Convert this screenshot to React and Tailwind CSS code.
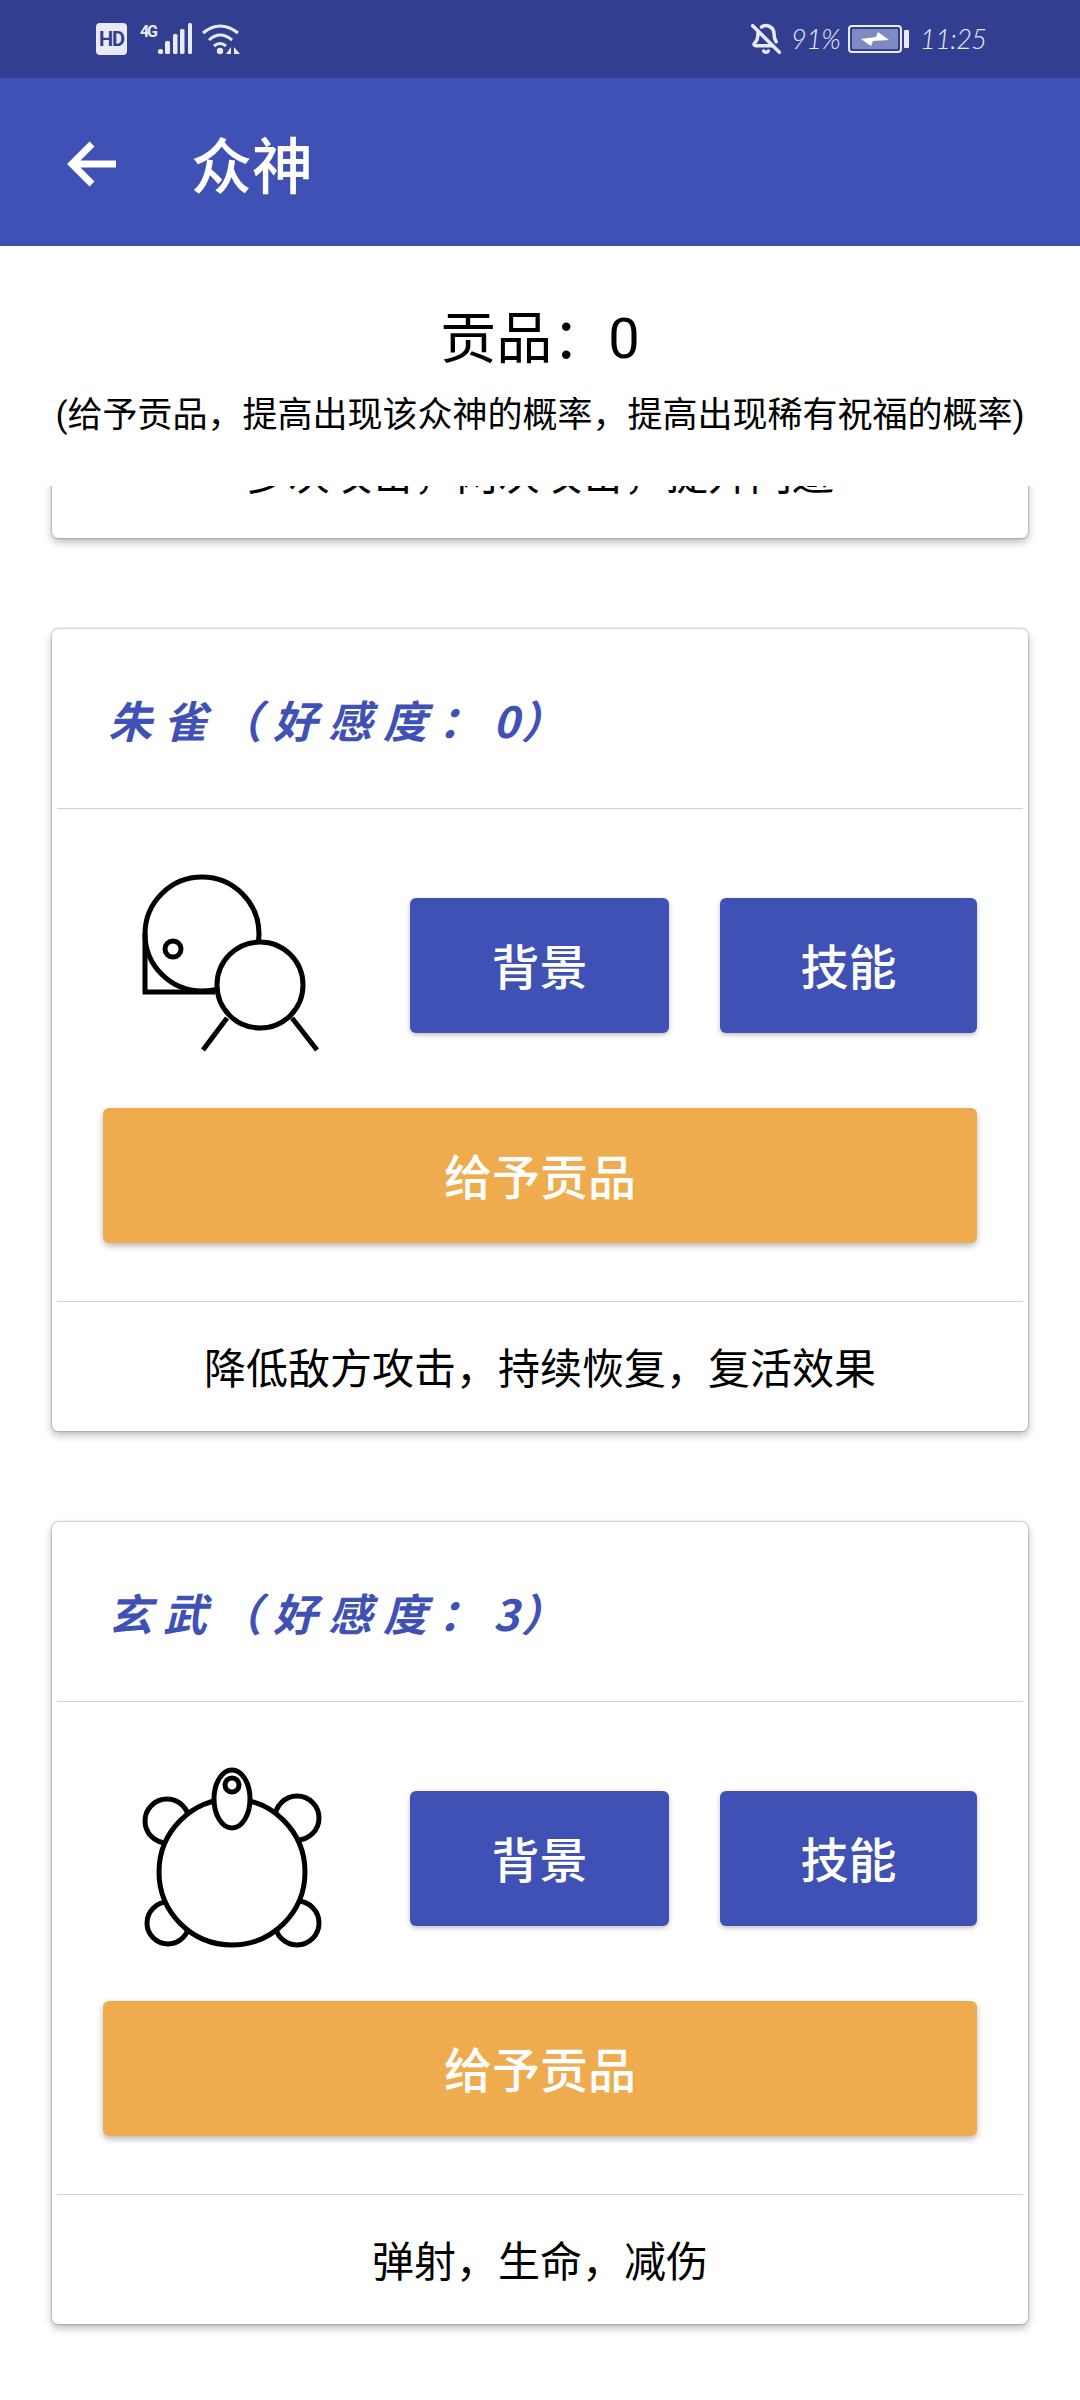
import React from "react";
import { BellOff } from "lucide-react";

const cardShadow = "shadow-[0_4px_8px_rgba(0,0,0,0.28),0_0_2px_rgba(0,0,0,0.5)]";

function Zhuque() {
  return (
    <svg width="260" height="230" viewBox="100 850 260 230" fill="none" stroke="#000" strokeWidth="5" className="shrink-0">
      <circle cx="202" cy="934" r="57" fill="#fff" />
      <path d="M145 934V992H215" />
      <circle cx="173" cy="949" r="8" />
      <path d="M227 1018L203 1050M292 1018L317 1050" />
      <circle cx="260" cy="985" r="43" fill="#fff" />
    </svg>
  );
}

function Xuanwu() {
  return (
    <svg width="260" height="230" viewBox="100 1743 260 230" fill="none" stroke="#000" strokeWidth="5" className="shrink-0">
      <circle cx="167" cy="1821" r="22" />
      <circle cx="297" cy="1818" r="22" />
      <circle cx="168" cy="1923" r="21" />
      <circle cx="297" cy="1923" r="22" />
      <circle cx="232" cy="1872" r="73" fill="#fff" />
      <ellipse cx="232" cy="1799" rx="18" ry="29" fill="#fff" />
      <circle cx="232" cy="1785" r="7" />
    </svg>
  );
}

function GodCard({ name, favor, icon, desc }) {
  return (
    <div className={"mx-[52px] h-[802px] shrink-0 rounded-[6px] bg-white flex flex-col " + cardShadow}>
      <div className="h-[179px] flex items-center pl-[56px] text-[#3f51b5] text-[44px] italic font-bold tracking-[11px] font-['Noto_Sans_CJK_SC',sans-serif]">
        {name}（好感度：<span className="tracking-[2px]">{favor}</span>）
      </div>
      <div className="mx-[5px] h-px bg-[#d0d0d0]" />
      <div className="flex items-center pt-[41px] pl-[48px]">
        {icon}
        <div className="ml-[50px] flex gap-[51px]">
          <button className="w-[259px] h-[135px] pt-[7px] rounded-[6px] bg-[#3f51b5] text-white text-[48px] font-medium shadow-[0_2px_5px_rgba(0,0,0,0.25)]">背景</button>
          <button className="w-[257px] h-[135px] pt-[7px] rounded-[6px] bg-[#3f51b5] text-white text-[48px] font-medium shadow-[0_2px_5px_rgba(0,0,0,0.25)]">技能</button>
        </div>
      </div>
      <button className="mt-[28px] ml-[51px] w-[874px] h-[135px] pt-[7px] shrink-0 rounded-[6px] bg-[#eeac4e] text-white text-[48px] font-medium shadow-[0_3px_6px_rgba(0,0,0,0.28)]">给予贡品</button>
      <div className="mt-[58px] mx-[5px] h-px bg-[#d0d0d0]" />
      <div className="flex-1 flex items-center justify-center pt-[5px] text-[42px] text-black">{desc}</div>
    </div>
  );
}

export default function App() {
  return (
    <div className="w-[1080px] h-[2400px] overflow-hidden bg-white flex flex-col font-['Roboto','Noto_Sans_CJK_SC',sans-serif]">
      <div className="h-[78px] shrink-0 bg-[#323f90] flex items-center text-[#e8ebf7] pl-[96px] pr-[97px]">
        <div className="w-[31px] h-[32px] rounded-[4px] bg-[#e8ebf7] text-[#323f90] text-[20px] font-bold flex items-center justify-center font-['Roboto',sans-serif] tracking-[-1px]">HD</div>
        <svg width="116" height="36" viewBox="121 21 116 36" fill="#e8ebf7">
          <text x="134" y="37" fontSize="16" fontWeight="700" fontFamily="Roboto" textLength="18">4G</text>
          <circle cx="154.5" cy="51.5" r="2.6" />
          <rect x="159" y="41" width="5" height="13" rx="1.5" />
          <rect x="167" y="34" width="4.5" height="20" rx="1.5" />
          <rect x="174" y="29" width="4.5" height="25" rx="1.5" />
          <rect x="182" y="23" width="4" height="31" rx="1.5" />
          <g fill="none" stroke="#e8ebf7" strokeWidth="3">
            <path d="M197 33Q214 19 232 33" />
            <path d="M203 40Q214 30 226 40" />
            <path d="M208 46Q214 41 220 46" />
          </g>
          <circle cx="214" cy="51" r="3.2" />
          <path d="M225 47V54H220ZM228 47V54H234Z" />
        </svg>
        <div className="flex-1" />
        <BellOff size={32} strokeWidth={2.6} className="text-[#e8ebf7]" />
        <span className="ml-[9px] w-[44px] text-[27px] italic font-light tracking-[-0.5px] whitespace-nowrap font-['Lato',sans-serif]">91%</span>
        <div className="ml-[13px] w-[54px] h-[28px] rounded-[4px] border-2 border-[#e8ebf7] p-[2px] flex">
          <div className="flex-1 bg-[#7f89c2] rounded-[1px] flex items-center justify-center">
            <svg width="28" height="14" viewBox="0 0 28 14" fill="#fff"><path d="M0 7L15 5L17 0L28 8L12 9L10 14Z" /></svg>
          </div>
        </div>
        <div className="ml-[2px] w-[5px] h-[18px] rounded-[1px] bg-[#e8ebf7]" />
        <span className="ml-[11px] w-[63px] text-[27px] italic font-light tracking-[-0.5px] whitespace-nowrap font-['Lato',sans-serif]">11:25</span>
      </div>

      <div className="h-[168px] shrink-0 bg-[#3f51b5] flex items-center pl-[66px] text-white">
        <svg width="50" height="46" viewBox="62 141 50 46" fill="none" stroke="#fff" strokeWidth="7" className="mt-[4px]">
          <path d="M112 164H70M88 144L68 164L88 184" />
        </svg>
        <div className="ml-[75px] text-[61px] font-medium mt-[2px] font-['Noto_Sans_CJK_SC',sans-serif]">众神</div>
      </div>

      <div className="h-[240px] shrink-0 flex flex-col items-center text-black">
        <div className="mt-[57px] text-[56px] leading-[72px]">贡品：0</div>
        <div className="mt-[17px] text-[35px] leading-[48px] whitespace-nowrap">(给予贡品，提高出现该众神的概率，提高出现稀有祝福的概率)</div>
      </div>

      <div className="flex-1 overflow-hidden flex flex-col gap-[91px]">
        <div className={"mx-[52px] h-[130px] -mt-[78px] shrink-0 rounded-[6px] bg-white flex items-center justify-center pt-[5px] text-[42px] text-black " + cardShadow}>多次攻击，两次攻击，提升闪避</div>
        <GodCard name="朱雀" favor="0" icon={<Zhuque />} desc="降低敌方攻击，持续恢复，复活效果" />
        <GodCard name="玄武" favor="3" icon={<Xuanwu />} desc="弹射，生命，减伤" />
      </div>
    </div>
  );
}
